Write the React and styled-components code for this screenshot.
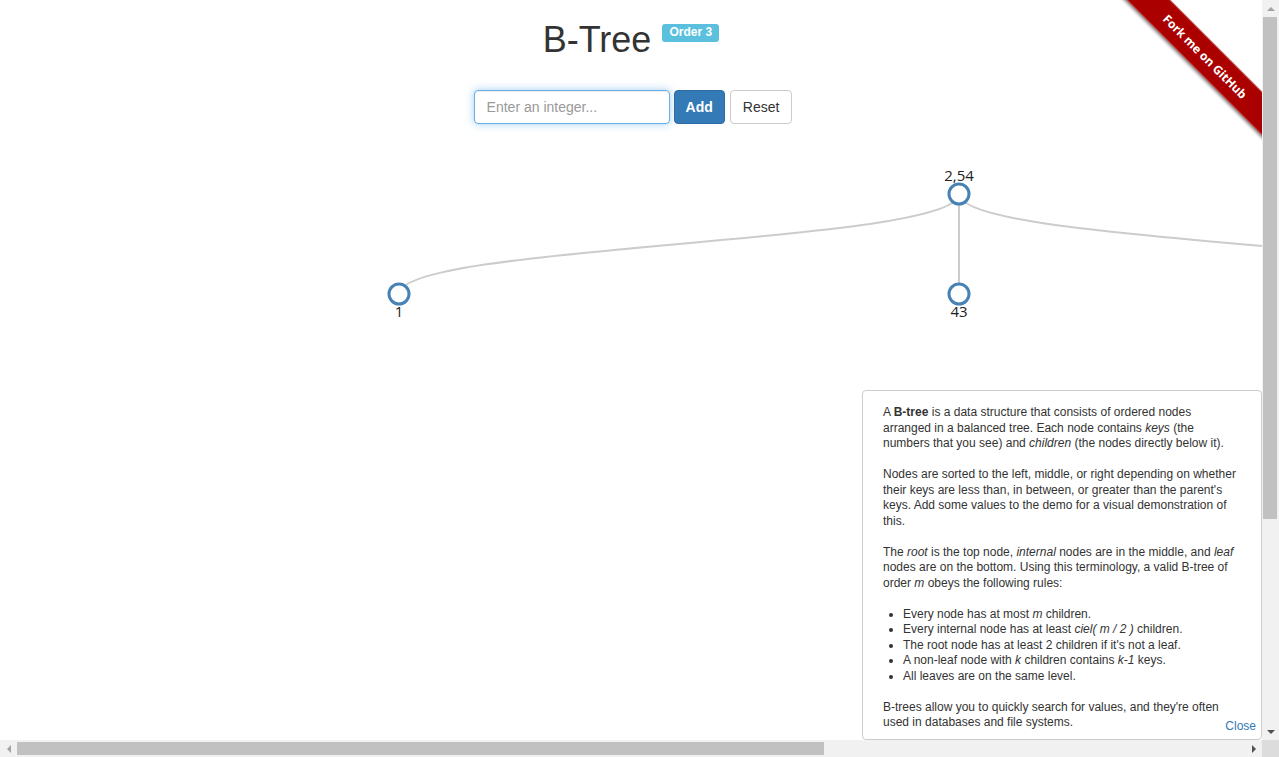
import React from 'react';
import styled, { createGlobalStyle } from 'styled-components';

const GlobalStyle = createGlobalStyle`
  html, body {
    margin: 0;
    padding: 0;
    background: #fff;
    overflow: hidden;
  }
  body {
    font-family: "Liberation Sans", Arial, Helvetica, sans-serif;
    font-size: 14px;
    color: #333;
  }
`;

const TREE_WIDTH = 1923;
const TREE_HEIGHT = 909;

const nodes = [
  { id: 'root', x: 959, y: 60, label: '2,54', leaf: false },
  { id: 'a', x: 399, y: 160, label: '1', leaf: true },
  { id: 'b', x: 959, y: 160, label: '43', leaf: true },
  { id: 'c', x: 1519, y: 160, label: '60', leaf: true },
];

const links = [
  ['root', 'a'],
  ['root', 'b'],
  ['root', 'c'],
];

const byId = Object.fromEntries(nodes.map((n) => [n.id, n]));

// vertical d3-style diagonal
const diagonal = (s, t) => {
  const my = (s.y + t.y) / 2;
  return `M${s.x},${s.y}C${s.x},${my} ${t.x},${my} ${t.x},${t.y}`;
};

const App = () => {
  return (
    <>
      <GlobalStyle />
      <Window>
        <Viewport>
          <Header>
            <Title>
              B-Tree
              <OrderLabel>Order 3</OrderLabel>
            </Title>
            <Controls>
              <Input placeholder="Enter an integer..." />
              <Button $primary>Add</Button>
              <Button>Reset</Button>
            </Controls>
          </Header>

          <TreeSvg width={TREE_WIDTH} height={TREE_HEIGHT}>
            {links.map(([s, t]) => (
              <Link key={s + t} d={diagonal(byId[s], byId[t])} />
            ))}
            {nodes.map((n) => (
              <g key={n.id} transform={`translate(${n.x},${n.y})`}>
                <NodeCircle r="10" />
                <NodeText y={n.leaf ? 18 : -18} dy=".35em" textAnchor="middle">
                  {n.label}
                </NodeText>
              </g>
            ))}
          </TreeSvg>

          <Ribbon>
            <RibbonBand>Fork me on GitHub</RibbonBand>
          </Ribbon>

          <InfoPanel>
            <p>
              A <b>B-tree</b> is a data structure that consists of ordered nodes arranged in a
              balanced tree. Each node contains <i>keys</i> (the numbers that you see) and{' '}
              <i>children</i> (the nodes directly below it).
            </p>
            <p>
              Nodes are sorted to the left, middle, or right depending on whether their keys are
              less than, in between, or greater than the parent's keys. Add some values to the
              demo for a visual demonstration of this.
            </p>
            <p>
              The <i>root</i> is the top node, <i>internal</i> nodes are in the middle, and{' '}
              <i>leaf</i> nodes are on the bottom. Using this terminology, a valid B-tree of
              order <i>m</i> obeys the following rules:
            </p>
            <ul>
              <li>
                Every node has at most <i>m</i> children.
              </li>
              <li>
                Every internal node has at least <i>ciel( m / 2 )</i> children.
              </li>
              <li>The root node has at least 2 children if it's not a leaf.</li>
              <li>
                A non-leaf node with <i>k</i> children contains <i>k-1</i> keys.
              </li>
              <li>All leaves are on the same level.</li>
            </ul>
            <p>
              B-trees allow you to quickly search for values, and they're often used in
              databases and file systems.
            </p>
            <CloseLink href="#">Close</CloseLink>
          </InfoPanel>
        </Viewport>

        <VScrollbar>
          <ScrollButton>
            <Arrow $dir="up" />
          </ScrollButton>
          <Track>
            <Thumb $vertical style={{ height: 502 }} />
          </Track>
          <ScrollButton>
            <Arrow $dir="down" $active />
          </ScrollButton>
        </VScrollbar>

        <HScrollbar>
          <ScrollButton>
            <Arrow $dir="left" />
          </ScrollButton>
          <Track $horizontal>
            <Thumb style={{ width: 807 }} />
          </Track>
          <ScrollButton>
            <Arrow $dir="right" $active />
          </ScrollButton>
        </HScrollbar>

        <Corner />
      </Window>
    </>
  );
};

export default App;

const Window = styled.div`
  display: grid;
  grid-template-columns: 1fr 17px;
  grid-template-rows: 1fr 17px;
  width: 100vw;
  height: 100vh;
`;

const Viewport = styled.div`
  position: relative;
  overflow: hidden;
  min-width: 0;
  min-height: 0;
`;

const Header = styled.div`
  display: flex;
  flex-direction: column;
  align-items: center;
`;

const Title = styled.h1`
  display: flex;
  align-items: flex-start;
  gap: 11px;
  margin: 20px 0 10px;
  font-size: 36px;
  font-weight: 500;
  line-height: 1.1;
  color: #333;
`;

const OrderLabel = styled.span`
  margin-top: 4px;
  padding: 0.2em 0.6em 0.3em;
  font-size: 12px;
  font-weight: 700;
  line-height: 1;
  color: #fff;
  background: #5bc0de;
  border-radius: 0.25em;
`;

const Controls = styled.div`
  display: flex;
  align-items: center;
  margin-top: 20px;
  padding-left: 4px;
`;

const Input = styled.input`
  box-sizing: border-box;
  width: 196px;
  height: 34px;
  padding: 6px 12px;
  font-family: inherit;
  font-size: 14px;
  color: #555;
  border: 1px solid #66afe9;
  border-radius: 4px;
  outline: 0;
  box-shadow: inset 0 1px 1px rgba(0, 0, 0, 0.075), 0 0 8px rgba(102, 175, 233, 0.6);

  &::placeholder {
    color: #999;
  }
`;

const Button = styled.button`
  box-sizing: border-box;
  height: 34px;
  margin-left: ${(p) => (p.$primary ? '4px' : '5px')};
  padding: 6px ${(p) => (p.$primary ? '11px' : '12px')};
  font-family: inherit;
  font-size: 14px;
  font-weight: ${(p) => (p.$primary ? 700 : 400)};
  color: ${(p) => (p.$primary ? '#fff' : '#333')};
  background: ${(p) => (p.$primary ? '#337ab7' : '#fff')};
  border: 1px solid ${(p) => (p.$primary ? '#2e6da4' : '#ccc')};
  border-radius: 4px;
  cursor: pointer;
`;

const TreeSvg = styled.svg`
  display: block;
  margin-top: 10px;
`;

const Link = styled.path`
  fill: none;
  stroke: #ccc;
  stroke-width: 2px;
`;

const NodeCircle = styled.circle`
  fill: #fff;
  stroke: steelblue;
  stroke-width: 3px;
`;

const NodeText = styled.text`
  font-family: "Open Sans", "Noto Sans", sans-serif;
  font-size: 15px;
  fill: #222;
`;

const Ribbon = styled.div`
  position: absolute;
  top: 0;
  right: 0;
  width: 149px;
  height: 149px;
  overflow: hidden;
  pointer-events: none;
`;

const RibbonBand = styled.div`
  position: absolute;
  left: -18px;
  top: 41px;
  width: 220px;
  height: 31px;
  box-sizing: border-box;
  transform: rotate(45deg);
  background: #aa0000;
  border-top: 1px solid rgba(255, 255, 255, 0.3);
  border-bottom: 1px solid rgba(255, 255, 255, 0.3);
  box-shadow: 0 2px 3px rgba(0, 0, 0, 0.45);
  color: #fff;
  font-family: "Open Sans", "Liberation Sans", sans-serif;
  font-size: 12px;
  font-weight: 700;
  line-height: 29px;
  text-align: center;
`;

const InfoPanel = styled.div`
  position: absolute;
  right: 0;
  bottom: 0;
  box-sizing: border-box;
  width: 400px;
  padding: 14.5px 20px 8.5px;
  background: #fff;
  border: 1px solid #ccc;
  border-radius: 4px;
  font-size: 12px;
  line-height: 15.5px;
  color: #333;

  p {
    margin: 0 0 15.5px;
  }

  p:last-of-type {
    margin-bottom: 0;
  }

  ul {
    margin: 0 0 15.5px;
    padding-left: 20px;
  }
`;

const CloseLink = styled.a`
  position: absolute;
  right: 5px;
  bottom: 5px;
  font-size: 12px;
  color: #337ab7;
  text-decoration: none;
`;

const VScrollbar = styled.div`
  display: flex;
  flex-direction: column;
  background: #f1f1f1;
`;

const HScrollbar = styled.div`
  display: flex;
  background: #f1f1f1;
`;

const ScrollButton = styled.div`
  display: flex;
  align-items: center;
  justify-content: center;
  flex: 0 0 17px;
  width: 17px;
  height: 17px;
`;

const Track = styled.div`
  display: flex;
  flex: 1;
  flex-direction: ${(p) => (p.$horizontal ? 'row' : 'column')};
  padding: ${(p) => (p.$horizontal ? '2px 0' : '0 2px 0 1px')};
`;

const Thumb = styled.div`
  flex: none;
  background: #c1c1c1;
`;

const arrowBorders = {
  up: (c) => `border-left: 4px solid transparent; border-right: 4px solid transparent; border-bottom: 4px solid ${c};`,
  down: (c) => `border-left: 4px solid transparent; border-right: 4px solid transparent; border-top: 4px solid ${c};`,
  left: (c) => `border-top: 4px solid transparent; border-bottom: 4px solid transparent; border-right: 4px solid ${c};`,
  right: (c) => `border-top: 4px solid transparent; border-bottom: 4px solid transparent; border-left: 4px solid ${c};`,
};

const Arrow = styled.span`
  width: 0;
  height: 0;
  ${(p) => arrowBorders[p.$dir](p.$active ? '#505050' : '#a3a3a3')}
`;

const Corner = styled.div`
  background: #dcdcdc;
`;
